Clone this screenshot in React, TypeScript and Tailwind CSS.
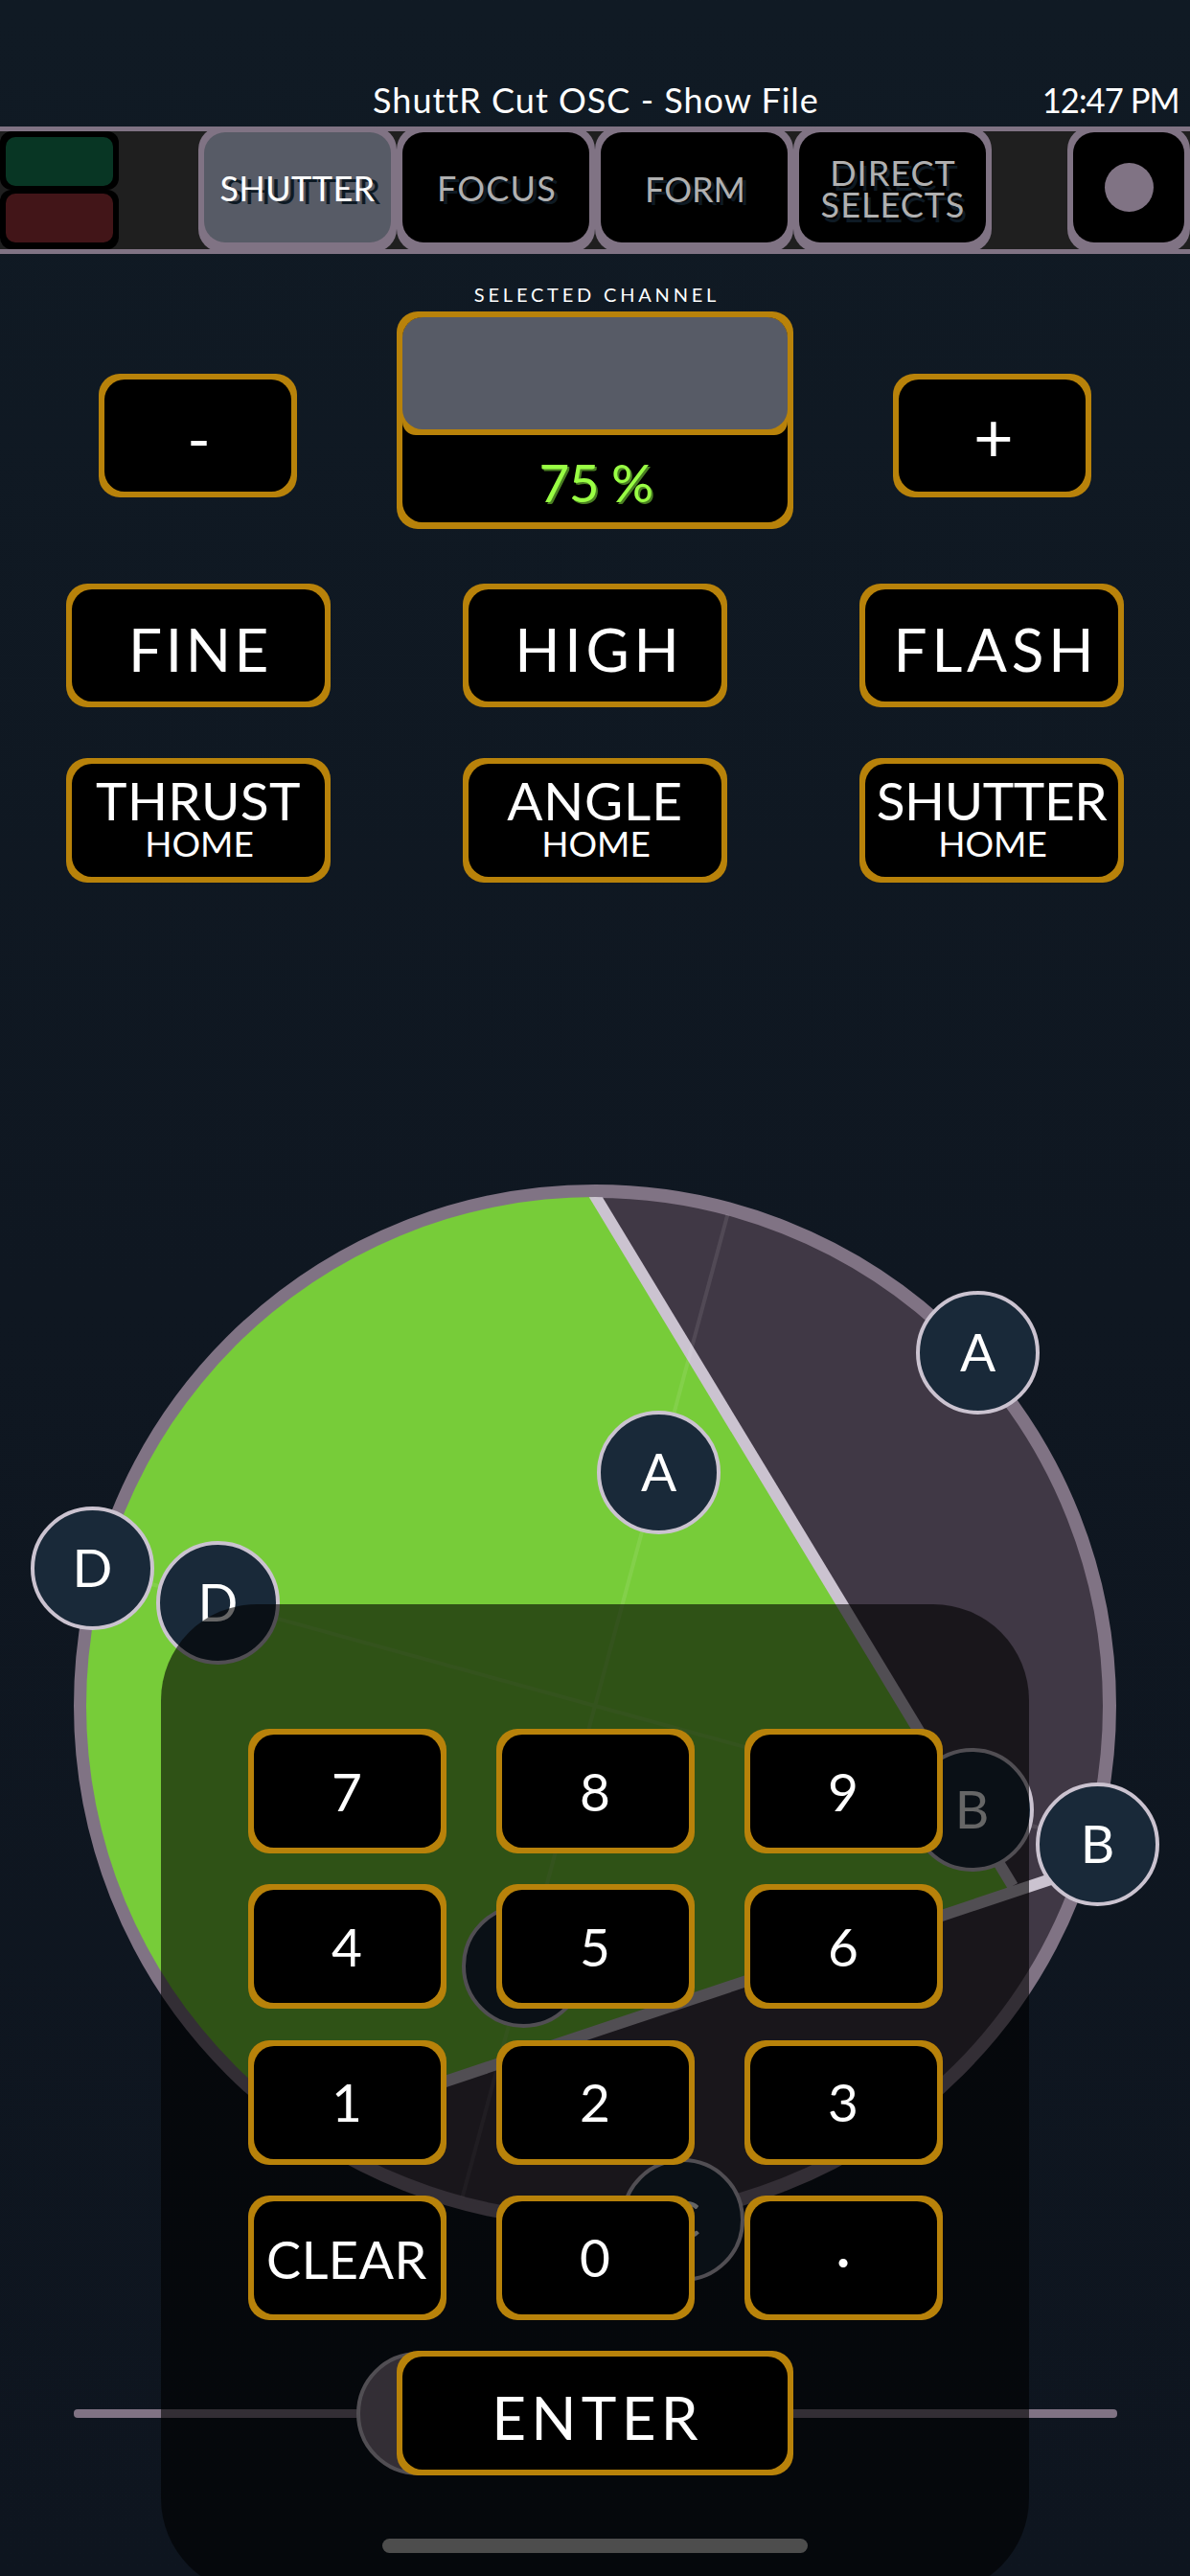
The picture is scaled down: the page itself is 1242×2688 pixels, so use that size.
import React from "react";
import clsx from "clsx";

function GoldButton({
  className,
  innerClassName,
  children,
}: {
  className?: string;
  innerClassName?: string;
  children?: React.ReactNode;
}) {
  return (
    <button className={clsx("flex rounded-[22px] bg-[#b8820a] p-1.5", className)}>
      <span
        className={clsx(
          "flex flex-1 flex-col items-center self-stretch rounded-[21px] bg-black leading-none whitespace-nowrap text-white",
          innerClassName,
        )}
      >
        {children}
      </span>
    </button>
  );
}

function Tab({
  label,
  active,
  textClassName,
}: {
  label: string[];
  active?: boolean;
  textClassName: string;
}) {
  return (
    <button className="-mt-[5px] flex h-[131px] w-[207px] rounded-[24px] bg-[#807384] px-1.5 pt-1.5 pb-2.5">
      <span
        className={clsx(
          "flex flex-1 flex-col items-center justify-center self-stretch rounded-[22px] text-[36px] leading-[33px] whitespace-nowrap",
          active ? "bg-[#575b66] text-white" : "bg-black text-[#b0b0b0]",
          textClassName,
        )}
      >
        {label.map((line) => (
          <span key={line}>{line}</span>
        ))}
      </span>
    </button>
  );
}

function HomeButton({ label, tracking }: { label: string; tracking: string }) {
  return (
    <GoldButton className="h-[130px] w-[276px]" innerClassName="pt-[13px]">
      <span className={clsx("text-[55px] leading-[51px]", tracking)}>{label}</span>
      <span className="pl-0.5 text-[37px] leading-[37px]">HOME</span>
    </GoldButton>
  );
}

const handles = [
  { label: "A", place: "left-[956px] top-[426px]" },
  { label: "A", place: "left-[623px] top-[551px]" },
  { label: "D", place: "left-[32px] top-[651px]" },
  { label: "D", place: "left-[163px] top-[687px]" },
  { label: "B", place: "left-[950px] top-[903px]" },
  { label: "B", place: "left-[1081px] top-[939px]" },
  { label: "C", place: "left-[482px] top-[1066px]" },
  { label: "C", place: "left-[648px] top-[1331px]" },
];

const digits = ["7", "8", "9", "4", "5", "6", "1", "2", "3"];

function Disc() {
  return (
    <svg className="block h-[1767px] w-[1242px]" viewBox="0 921 1242 1767">
      <defs>
        <clipPath id="aperture">
          <circle cx="621" cy="1780" r="531" />
        </clipPath>
      </defs>
      <circle cx="621" cy="1780" r="537" fill="#403845" stroke="#807384" strokeWidth="14" />
      <g clipPath="url(#aperture)">
        <path d="M618 1240 L1058 1970 L300 2227 L60 2300 L60 1240 Z" fill="#77cc39" />
        <path d="M612 1233 L1057 1968" stroke="#cbc3d0" strokeWidth="12" />
        <path d="M300 2227 L1140 1946.5" stroke="#cbc3d0" strokeWidth="12" />
        <path
          d="M763 1254 L479 2306 M100 1637 L1142 1923"
          stroke="#ffffff"
          strokeOpacity="0.09"
          strokeWidth="4"
        />
      </g>
    </svg>
  );
}

function Keypad() {
  return (
    <div className="absolute top-[753px] left-[168px] grid h-[1033px] w-[906px] auto-rows-[130px] grid-cols-[207px_207px_207px] content-start justify-center gap-x-[52px] gap-y-[32.3px] rounded-[100px] bg-black/60 pt-[130px]">
      {digits.map((d) => (
        <GoldButton key={d} innerClassName="justify-center text-[55px]">
          {d}
        </GoldButton>
      ))}
      <GoldButton innerClassName="justify-center pt-1 text-[54px] tracking-[0.5px]">CLEAR</GoldButton>
      <GoldButton innerClassName="justify-center text-[55px]">0</GoldButton>
      <GoldButton innerClassName="justify-center text-[60px]">·</GoldButton>
      <GoldButton
        className="col-span-3 w-[414px] justify-self-center"
        innerClassName="justify-center pt-[7px] text-[62px]"
      >
        <span className="-mr-[5px] tracking-[5.2px]">ENTER</span>
      </GoldButton>
    </div>
  );
}

export default function App() {
  return (
    <div className="relative flex h-[2688px] w-[1242px] flex-col overflow-hidden bg-linear-to-b from-[#101a24] via-[#0f1721] to-[#0e151f] font-['Lato',sans-serif] text-white">
      <header className="grid h-[132px] grid-cols-[1fr_auto_1fr] items-end pb-2 text-[36px] leading-[40px]">
        <span />
        <h1 className="pl-0.5 tracking-[1px]">ShuttR Cut OSC - Show File</h1>
        <span className="origin-right scale-x-[0.96] pr-3 text-right tracking-[-1px]">12:47 PM</span>
      </header>

      <nav className="flex h-[133px] border-y-[5px] border-[#807384] bg-[#1f1f1f]">
        <div className="mr-[83px] flex w-[124px] flex-col">
          <div className="flex h-[61px] justify-center rounded-xl bg-black pt-1.5">
            <div className="h-[51px] w-[112px] rounded-[10px] bg-[#083624]" />
          </div>
          <div className="flex h-[62px] justify-center rounded-xl bg-black pt-1">
            <div className="h-[51px] w-[112px] rounded-[10px] bg-[#421518]" />
          </div>
        </div>
        <Tab label={["SHUTTER"]} active textClassName="pt-0.5 tracking-[0.4px] [text-shadow:6px_3px_0_#0e1a24]" />
        <Tab label={["FOCUS"]} textClassName="pt-0.5 pl-0.5 tracking-[1.2px] [text-shadow:4px_3px_0_#0e1a24]" />
        <Tab label={["FORM"]} textClassName="pt-[3px] pl-0.5 [text-shadow:4px_3px_0_#0e1a24]" />
        <Tab label={["DIRECT", "SELECTS"]} textClassName="pt-[3px] pl-px tracking-[1px] [text-shadow:3px_5px_0_#0e1a24]" />
        <button className="-mt-[5px] ml-[79px] flex h-[131px] w-[128px] rounded-[24px] bg-[#807384] px-1.5 pt-1.5 pb-2.5">
          <span className="flex flex-1 items-center justify-center self-stretch rounded-[22px] bg-black">
            <span className="size-[51px] rounded-full bg-[#807384]" />
          </span>
        </button>
      </nav>

      <section className="flex flex-col items-center pt-8">
        <h2 className="-mr-1 text-[20px] leading-5 tracking-[3.8px]">SELECTED CHANNEL</h2>
        <div className="mt-2 flex h-[227px] w-full items-start justify-between px-[103px]">
          <GoldButton className="mt-[65px] h-[129px] w-[207px]" innerClassName="justify-center pt-1 pl-0.5 text-[66px]">
            -
          </GoldButton>
          <div className="flex h-[227px] w-[414px] rounded-[22px] bg-[#b8820a] px-1.5 pt-1.5 pb-[7px]">
            <div className="flex flex-1 flex-col overflow-hidden rounded-[21px] bg-black">
              <div className="h-[123px] rounded-b-[14px] bg-[#b8820a] pb-1.5">
                <div className="h-full rounded-[21px] bg-[#575b66]" />
              </div>
              <div className="flex flex-1 items-center justify-center pt-2 pl-0.5 text-[55px] leading-none tracking-[-0.8px] text-[#99ff44] [text-shadow:2px_2px_0_#4a8022]">
                75 %
              </div>
            </div>
          </div>
          <GoldButton className="mt-[65px] h-[129px] w-[207px]" innerClassName="justify-center pb-px pl-[3px] text-[72px]">
            +
          </GoldButton>
        </div>
      </section>

      <section className="mt-[57px] flex justify-between px-[69px] text-[62px]">
        <GoldButton className="h-[129px] w-[276px]" innerClassName="justify-center pt-[7px]">
          <span className="-mr-1 tracking-[3.6px]">FINE</span>
        </GoldButton>
        <GoldButton className="h-[129px] w-[276px]" innerClassName="justify-center pt-[7px]">
          <span className="-mr-[9px] tracking-[4.8px]">HIGH</span>
        </GoldButton>
        <GoldButton className="h-[129px] w-[276px]" innerClassName="justify-center pt-[7px]">
          <span className="-mr-[9px] tracking-[4.8px]">FLASH</span>
        </GoldButton>
      </section>

      <section className="mt-[53px] flex justify-between px-[69px]">
        <HomeButton label="THRUST" tracking="tracking-[0.4px]" />
        <HomeButton label="ANGLE" tracking="tracking-[0.8px]" />
        <HomeButton label="SHUTTER" tracking="tracking-[-0.4px]" />
      </section>

      <main className="relative h-[1767px]">
        <Disc />
        {handles.map(({ label, place }, i) => (
          <div
            key={i}
            className={clsx(
              "absolute flex size-[129px] items-center justify-center rounded-full border-4 border-[#cbc3d0] bg-[#192939] pb-[3px] text-[55px] leading-none",
              place,
            )}
          >
            {label}
          </div>
        ))}
        <div className="absolute top-[1593px] left-[77px] h-[9px] w-[1089px] rounded-[4px] bg-[#807384]" />
        <div className="absolute top-[1533px] left-[372px] size-[129px] rounded-full border-4 border-[#cbc3d0] bg-[#807384]" />
        <Keypad />
        <div className="absolute bottom-6 left-[399px] h-[15px] w-[444px] rounded-full bg-[#4d4d4d]" />
      </main>
    </div>
  );
}
